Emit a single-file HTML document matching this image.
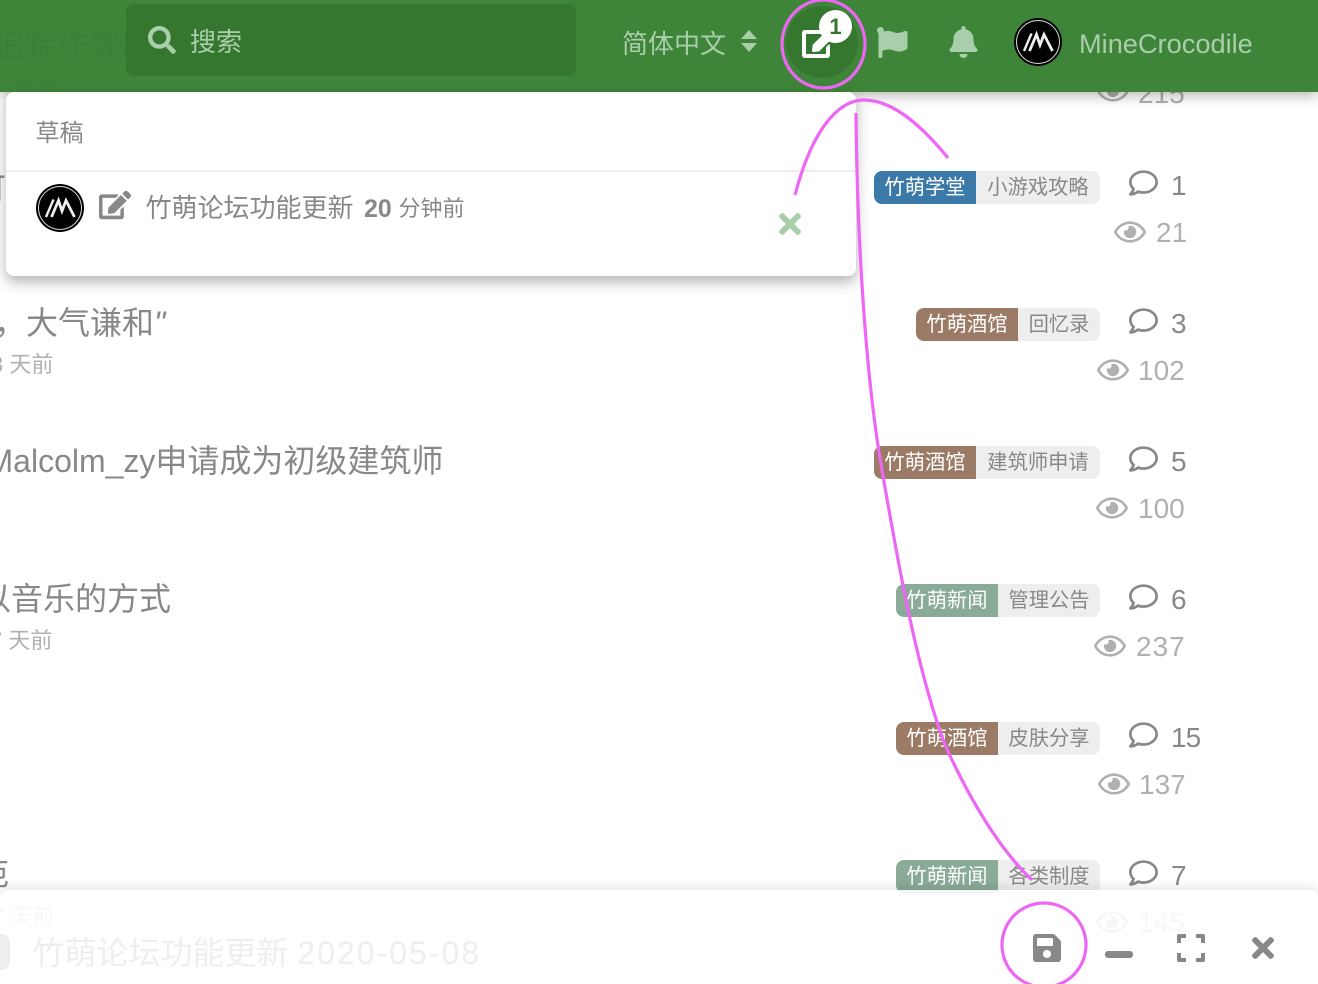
<!DOCTYPE html>
<html lang="zh">
<head>
<meta charset="utf-8">
<style>
html,body{margin:0;padding:0;width:1318px;height:984px;overflow:hidden;background:#fff}
body{position:relative;font-family:"Liberation Sans","Noto Sans CJK SC",sans-serif;color:#888}
.t{position:absolute;white-space:nowrap;line-height:1}
.title{font-size:32px;color:#888}
.meta{font-size:22px;color:#b0b0b0}
.tag{position:absolute;height:33px;display:flex;font-size:20.3px;line-height:34px;border-radius:8px;overflow:hidden;white-space:nowrap}
.tag b{font-weight:400;color:#fff;width:102px;text-align:center;box-sizing:border-box;padding-right:0}
.tag i{font-style:normal;background:#eee;color:#888;text-align:center;width:124px;box-sizing:border-box;padding-right:0}
.n{position:absolute;font-size:28px;line-height:1;color:#888;white-space:nowrap}
.v{position:absolute;font-size:28px;line-height:1;color:#b0b0b0;white-space:nowrap}
svg{position:absolute;display:block}
#hdr{position:absolute;left:0;top:0;width:1318px;height:92px;background:#3e8539;box-shadow:0 2px 14px rgba(0,0,0,.35);overflow:hidden}
#drop{position:absolute;left:6px;top:92px;width:850px;height:184px;background:#fff;border-radius:8px;box-shadow:0 6px 14px rgba(0,0,0,.3)}
#comp{position:absolute;left:0;top:890px;width:1318px;height:94px;background:rgba(255,255,255,.9);border-radius:8px 8px 0 0;box-shadow:0 -3px 10px rgba(0,0,0,.1)}
</style>
</head>
<body>
<svg width="0" height="0" style="position:absolute">
<defs>
<symbol id="eye" viewBox="0 0 576 512"><path fill="currentColor" d="M288 144a110.94 110.94 0 0 0-31.24 5 55.4 55.4 0 0 1 7.24 27 56 56 0 0 1-56 56 55.4 55.4 0 0 1-27-7.24A111.71 111.71 0 1 0 288 144zm284.52 97.4C518.29 135.59 410.93 64 288 64S57.68 135.64 3.48 241.41a32.35 32.35 0 0 0 0 29.19C57.71 376.41 165.07 448 288 448s230.32-71.64 284.52-177.41a32.35 32.35 0 0 0 0-29.19zM288 400c-98.65 0-189.09-55-237.93-144C98.91 167 189.34 112 288 112s189.09 55 237.93 144C477.1 345 386.66 400 288 400z"/></symbol>
<symbol id="cmt" viewBox="0 0 512 512"><path fill="currentColor" d="M256 32C114.6 32 0 125.1 0 240c0 47.6 19.9 91.2 52.9 126.3C38 405.7 7 439.1 6.5 439.5c-6.6 7-8.4 17.2-4.6 26S14.4 480 24 480c61.5 0 110-25.7 139.1-46.3C192 442.8 223.2 448 256 448c141.4 0 256-93.1 256-208S397.4 32 256 32zm0 368c-26.7 0-53.1-4.1-78.4-12.1l-22.7-7.2-19.5 13.8c-14.3 10.1-33.9 21.4-57.5 29 7.3-12.1 14.4-25.7 19.9-40.2l10.6-28.1-20.6-21.8C69.7 314.1 48 282.2 48 240c0-88.2 93.3-160 208-160s208 71.8 208 160-93.3 160-208 160z"/></symbol>
<symbol id="edit" viewBox="0 0 576 512"><path fill="currentColor" d="M402.6 83.2l90.2 90.2c3.8 3.8 3.8 10 0 13.8L274.4 405.6l-92.8 10.3c-12.4 1.4-22.9-9.1-21.5-21.5l10.3-92.8L388.8 83.2c3.8-3.8 10-3.8 13.8 0zm162-22.9l-48.8-48.8c-15.2-15.2-39.9-15.2-55.2 0l-35.4 35.4c-3.8 3.8-3.8 10 0 13.8l90.2 90.2c3.8 3.8 10 3.8 13.8 0l35.4-35.4c15.2-15.3 15.2-40 0-55.2zM384 346.2V448H64V128h229.8c3.2 0 6.2-1.3 8.5-3.5l40-40c7.6-7.6 2.2-20.5-8.5-20.5H48C21.5 64 0 85.5 0 112v352c0 26.5 21.5 48 48 48h352c26.5 0 48-21.5 48-48V306.2c0-10.7-12.9-16-20.5-8.5l-40 40c-2.2 2.3-3.5 5.3-3.5 8.5z"/></symbol>
<symbol id="x" viewBox="0 0 352 512"><path fill="currentColor" d="M242.72 256l100.07-100.07c12.28-12.28 12.28-32.19 0-44.48l-22.24-22.24c-12.28-12.28-32.19-12.28-44.48 0L176 189.28 75.93 89.21c-12.28-12.28-32.19-12.28-44.48 0L9.21 111.45c-12.28 12.28-12.28 32.19 0 44.48L109.28 256 9.21 356.07c-12.28 12.28-12.28 32.19 0 44.48l22.24 22.24c12.28 12.28 32.2 12.28 44.48 0L176 322.72l100.07 100.07c12.28 12.28 32.2 12.28 44.48 0l22.24-22.24c12.28-12.28 12.28-32.19 0-44.48L242.72 256z"/></symbol>
<symbol id="ava" viewBox="0 0 48 48"><circle cx="24" cy="24" r="24" fill="#000"/><circle cx="24" cy="24" r="21.5" fill="none" stroke="#ddd" stroke-width="1"/><path fill="none" stroke="#eee" stroke-width="2.4" d="M10 33L17.5 15.5"/><path fill="none" stroke="#eee" stroke-width="2.8" stroke-linejoin="miter" d="M15.5 33L22.5 16.5L26 27L30 16.5L38.5 33"/></symbol>
</defs>
</svg>

<!-- background rows -->
<div class="t title" style="left:-26px;top:173px;font-size:32px">可</div>
<div class="t title" style="left:-6px;top:307px">，大气谦和<span style="font-style:italic">"</span></div>
<div class="t meta" style="left:-9px;top:354px">3 天前</div>
<div class="t title" style="left:-13.5px;top:445px">Malcolm_zy申请成为初级建筑师</div>
<div class="t title" style="left:-21px;top:583px">以音乐的方式</div>
<div class="t meta" style="left:-10px;top:630px">7 天前</div>
<div class="t title" style="left:-23px;top:858px">范</div>

<div class="v" style="left:1138px;top:80px">215</div>
<svg style="left:1097px;top:76px;color:#b0b0b0" width="32" height="30"><use href="#eye"/></svg>

<div class="tag" style="left:874px;top:171px"><b style="background:#3b7aa8">竹萌学堂</b><i>小游戏攻略</i></div>
<svg style="left:1129px;top:167px;color:#888" width="29" height="32"><use href="#cmt"/></svg>
<div class="n" style="left:1171px;top:172px">1</div>
<svg style="left:1114px;top:216px;color:#b0b0b0" width="32" height="32"><use href="#eye"/></svg>
<div class="v" style="left:1156px;top:219px">21</div>

<div class="tag" style="left:916px;top:308px"><b style="background:#9c7b66">竹萌酒馆</b><i style="width:82px">回忆录</i></div>
<svg style="left:1129px;top:305px;color:#888" width="29" height="32"><use href="#cmt"/></svg>
<div class="n" style="left:1171px;top:310px">3</div>
<svg style="left:1097px;top:354px;color:#b0b0b0" width="32" height="32"><use href="#eye"/></svg>
<div class="v" style="left:1138px;top:357px">102</div>

<div class="tag" style="left:874px;top:446px"><b style="background:#9c7b66">竹萌酒馆</b><i>建筑师申请</i></div>
<svg style="left:1129px;top:443px;color:#888" width="29" height="32"><use href="#cmt"/></svg>
<div class="n" style="left:1171px;top:448px">5</div>
<svg style="left:1096px;top:492px;color:#b0b0b0" width="32" height="32"><use href="#eye"/></svg>
<div class="v" style="left:1138px;top:495px">100</div>

<div class="tag" style="left:896px;top:584px"><b style="background:#8aab98">竹萌新闻</b><i style="width:102px">管理公告</i></div>
<svg style="left:1129px;top:581px;color:#888" width="29" height="32"><use href="#cmt"/></svg>
<div class="n" style="left:1171px;top:586px">6</div>
<svg style="left:1094px;top:630px;color:#b0b0b0" width="32" height="32"><use href="#eye"/></svg>
<div class="v" style="left:1136px;top:633px;letter-spacing:1px">237</div>

<div class="tag" style="left:896px;top:722px"><b style="background:#9c7b66">竹萌酒馆</b><i style="width:102px">皮肤分享</i></div>
<svg style="left:1129px;top:719px;color:#888" width="29" height="32"><use href="#cmt"/></svg>
<div class="n" style="left:1171px;top:724px;letter-spacing:-1px">15</div>
<svg style="left:1098px;top:768px;color:#b0b0b0" width="32" height="32"><use href="#eye"/></svg>
<div class="v" style="left:1139px;top:771px">137</div>

<div class="tag" style="left:896px;top:860px"><b style="background:#8aab98">竹萌新闻</b><i style="width:102px">各类制度</i></div>
<svg style="left:1129px;top:857px;color:#888" width="29" height="32"><use href="#cmt"/></svg>
<div class="n" style="left:1171px;top:862px">7</div>
<svg style="left:1096px;top:906px;color:#b0b0b0" width="32" height="32"><use href="#eye"/></svg>
<div class="v" style="left:1138px;top:909px">145</div>
<div class="t meta" style="left:-8px;top:906px">7 天前</div>

<!-- header -->
<div id="hdr">
  <div class="t" style="left:-7px;top:30px;font-size:32px;color:#3c8038">追踪作弊器</div>
  <div class="t" style="left:-5px;top:80px;font-size:22px;color:#3c8038">7 天前</div>
  <div style="position:absolute;left:126px;top:4px;width:450px;height:72px;background:#367730;border-radius:8px"></div>
  <svg style="left:148px;top:26px;color:#a8ceaa" width="28" height="28" viewBox="0 0 512 512"><path fill="currentColor" d="M505 442.7L405.3 343c-4.5-4.5-10.6-7-17-7H372c27.6-35.3 44-79.7 44-128C416 93.1 322.9 0 208 0S0 93.1 0 208s93.1 208 208 208c48.3 0 92.7-16.4 128-44v16.3c0 6.4 2.5 12.5 7 17l99.7 99.7c9.4 9.4 24.6 9.4 33.9 0l28.3-28.3c9.4-9.4 9.4-24.6.1-34zM208 336c-70.7 0-128-57.2-128-128 0-70.7 57.2-128 128-128 70.7 0 128 57.2 128 128 0 70.7-57.2 128-128 128z"/></svg>
  <div class="t" style="left:190px;top:29px;font-size:26px;color:#a8ceaa">搜索</div>
  <div class="t" style="left:622px;top:31px;font-size:26px;color:#a8ceaa">简体中文</div>
  <svg style="left:741px;top:30px" width="16" height="22" viewBox="0 0 16 22"><path fill="#a8ceaa" d="M8 0l8 9H0zM0 13h16l-8 9z"/></svg>
  <div style="position:absolute;left:786px;top:6px;width:72px;height:72px;border-radius:50%;background:#367730"></div>
  <svg style="left:802px;top:26px;color:#fff" width="36" height="32"><use href="#edit"/></svg>
  <div style="position:absolute;left:819px;top:10px;width:33px;height:33px;border-radius:50%;background:#fff;font-size:22px;font-weight:700;line-height:33px;text-align:center;color:#367730">1</div>
  <svg style="left:876px;top:27px" width="32" height="31" viewBox="0 0 512 512"><path fill="#a8ceaa" d="M349.565 98.783C295.978 98.783 251.721 64 184.348 64c-24.955 0-47.309 4.384-68.045 12.013a55.947 55.947 0 0 0 3.586-23.562C118.117 24.015 94.806 1.206 66.338.048 34.345-1.254 8 24.296 8 56c0 19.026 9.497 35.825 24 45.945V488c0 13.255 10.745 24 24 24h16c13.255 0 24-10.745 24-24v-94.4c28.311-12.064 63.582-22.122 114.435-22.122 53.588 0 97.844 34.783 165.217 34.783 48.169 0 86.667-16.294 122.505-40.858C506.84 359.452 512 349.571 512 339.045v-243.1c0-23.393-24.269-38.87-45.485-29.016-34.338 15.948-76.454 31.854-116.95 31.854z"/></svg>
  <svg style="left:949px;top:26px" width="29" height="32" viewBox="0 0 448 512"><path fill="#a8ceaa" d="M224 512c35.32 0 63.97-28.65 63.97-64H160.03c0 35.35 28.65 64 63.97 64zm215.39-149.71c-19.32-20.76-55.47-51.99-55.47-154.29 0-77.7-54.48-139.9-127.94-155.16V32c0-17.67-14.32-32-31.98-32s-31.98 14.33-31.98 32v20.84C118.56 68.1 64.08 130.3 64.08 208c0 102.3-36.15 133.53-55.47 154.29-6 6.45-8.66 14.16-8.61 21.71.11 16.4 12.98 32 32.1 32h383.8c19.12 0 32-15.6 32.1-32 .05-7.55-2.61-15.27-8.61-21.71z"/></svg>
  <svg style="left:1014px;top:18px" width="48" height="48"><use href="#ava"/></svg>
  <div class="t" style="left:1079px;top:30px;font-size:27.2px;color:#a8ceaa">MineCrocodile</div>
</div>

<!-- dropdown -->
<div id="drop">
  <div class="t" style="left:29.5px;top:30px;font-size:24px;color:#888">草稿</div>
  <div style="position:absolute;left:0;top:78px;width:850px;height:2px;background:#eee"></div>
  <svg style="left:30px;top:92px" width="48" height="48"><use href="#ava"/></svg>
  <svg style="left:93px;top:98px;color:#888" width="32" height="30"><use href="#edit"/></svg>
  <div class="t" style="left:139.5px;top:103px;font-size:26px;color:#888">竹萌论坛功能更新</div>
  <div class="t" style="left:358px;top:105px;font-size:25px;font-weight:700;color:#888">20</div>
  <div class="t" style="left:392.5px;top:106px;font-size:22px;color:#888">分钟前</div>
  <svg style="left:772px;top:116px;color:#a8ceaa" width="24" height="32"><use href="#x"/></svg>
</div>

<!-- composer -->
<div id="comp">
  <div style="position:absolute;left:0;top:44px;width:10px;height:36px;background:#eee;border-radius:0 8px 8px 0"></div>
  <div class="t" style="left:32.5px;top:47px;font-size:32px;color:#eee">竹萌论坛功能更新 <span style="letter-spacing:2px">2020-05-08</span></div>
  <svg style="left:1033px;top:42px;color:#888" width="28" height="32" viewBox="0 0 448 512"><path fill="currentColor" d="M433.941 129.941l-83.882-83.882A48 48 0 0 0 316.118 32H48C21.49 32 0 53.49 0 80v352c0 26.51 21.49 48 48 48h352c26.51 0 48-21.49 48-48V163.882a48 48 0 0 0-14.059-33.941zM224 416c-35.346 0-64-28.654-64-64 0-35.346 28.654-64 64-64s64 28.654 64 64c0 35.346-28.654 64-64 64zm96-304.52V212c0 6.627-5.373 12-12 12H76c-6.627 0-12-5.373-12-12V108c0-6.627 5.373-12 12-12h228.52c3.183 0 6.235 1.264 8.485 3.515l3.48 3.48A11.996 11.996 0 0 1 320 111.48z"/></svg>
  <div style="position:absolute;left:1105px;top:61px;width:28px;height:7px;border-radius:3px;background:#888"></div>
  <svg style="left:1177px;top:44px" width="28" height="28" viewBox="0 0 28 28"><path fill="none" stroke="#888" stroke-width="4" stroke-linejoin="round" d="M2 9V2h7M19 2h7v7M26 19v7h-7M9 26H2v-7"/></svg>
  <svg style="left:1251px;top:42px;color:#888" width="24" height="32"><use href="#x"/></svg>
</div>

<!-- annotations -->
<svg style="left:0;top:0;pointer-events:none" width="1318" height="984" viewBox="0 0 1318 984" fill="none" stroke="#ee66f5" stroke-width="3.2">
  <ellipse cx="823.5" cy="44" rx="41.5" ry="44"/>
  <circle cx="1044" cy="945" r="42"/>
  <path d="M795 195C812 130 838 100 864 100C893 100 922 126 948 158"/>
  <path d="M856 113C857 240 866 380 882 470C895 545 915 665 945 745C970 800 1000 850 1032 880"/>
</svg>
</body>
</html>
